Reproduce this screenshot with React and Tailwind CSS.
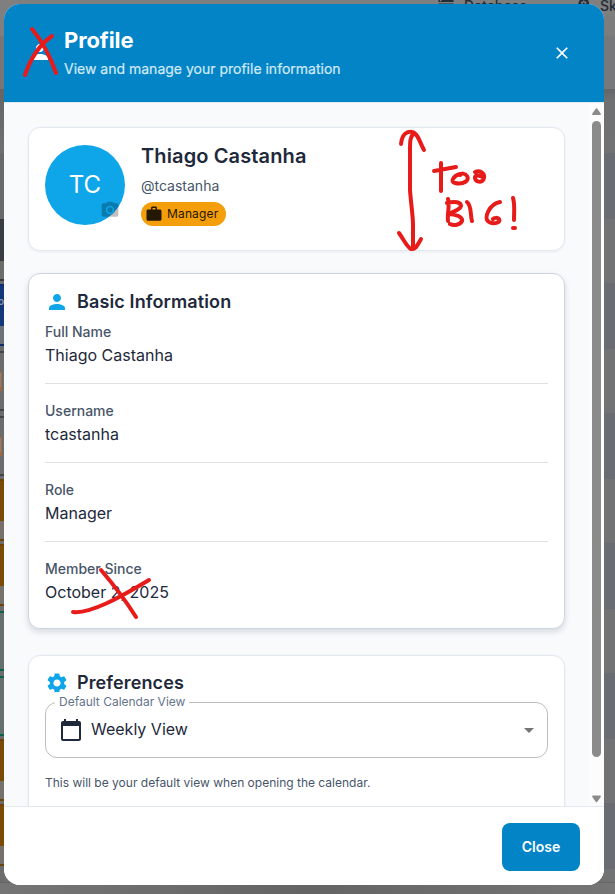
import React from "react";
import {
  MdPerson,
  MdSettings,
  MdCalendarToday,
  MdWork,
  MdCameraAlt,
  MdClose,
  MdArrowDropDown,
  MdStorage,
  MdPsychology,
} from "react-icons/md";

const shadowed = "border-[#e2e8f0] shadow-[0_1px_3px_rgba(15,23,42,0.06)]";

// Calendar entries that peek out on the left of the dialog.
function Entry({ line, fill, foot = "bg-[#77716b]", label }) {
  return (
    <div className="flex h-[62px] w-full flex-col">
      <div className={`h-[2px] ${line}`} />
      <div className={`flex h-[40px] justify-end overflow-hidden pt-[7px] text-[10px] font-semibold leading-[16px] text-[#8b98ae] ${fill}`}>
        {label}
      </div>
      <div className={`h-[18px] ${foot}`} />
      <div className={`h-[2px] ${line}`} />
    </div>
  );
}

function Outlined({ line, children }) {
  return (
    <div className={`flex h-[60px] w-full flex-col justify-center border-y-2 ${line}`}>
      {children}
    </div>
  );
}

function OrangeBox() {
  return (
    <div className="h-[19px] w-[2px] border-y border-r border-[#a0673f] border-b-4 bg-[#85827f]" />
  );
}

function LeftStrip() {
  return (
    <div className="flex w-1 flex-col overflow-hidden bg-[#6c6c6c]">
      <div className="h-[36px] shrink-0 bg-[#7f7f7f]" />
      <div className="h-[53px] shrink-0 bg-[#777777]" />
      <div className="h-[64px] shrink-0 bg-gradient-to-b from-[#656565] to-[#707070]" />
      <div className="h-[66px] shrink-0 bg-[#69696c]" />
      <Entry line="bg-[#393a3b]" fill="bg-[#373d42]" foot="bg-[#6c6c6a]" />
      <div className="h-[3px]" />
      <Entry line="bg-[#0d2f70]" fill="bg-[#12377a]" foot="bg-[#6d7279]" label="o" />
      <div className="h-[5px]" />
      <Outlined line="border-[#444546]"><OrangeBox /></Outlined>
      <div className="h-[5px]" />
      <Outlined line="border-[#444546]"><OrangeBox /></Outlined>
      <div className="h-[3px]" />
      <Entry line="bg-[#6b4208]" fill="bg-[#7a4b05]" />
      <div className="h-[3px]" />
      <Entry line="bg-[#6b4208]" fill="bg-[#7a4b05]" />
      <div className="h-[5px]" />
      <Outlined line="border-[#0c6249] bg-[#66706d]" />
      <div className="h-[5px]" />
      <Outlined line="border-[#0c6249] bg-[#66706d]" />
      <div className="h-[3px]" />
      <Entry line="bg-[#6b4208]" fill="bg-[#7a4b05]" />
      <div className="h-[3px]" />
      <Entry line="bg-[#6b4208]" fill="bg-[#7a4b05]" />
    </div>
  );
}

function RightStrip() {
  return (
    <div className="flex w-[11px] flex-col">
      <div className="h-[36px] shrink-0 bg-[#7d7d7d]" />
      <div className="h-[53px] shrink-0 bg-[#76787b]" />
      <div className="h-[64px] shrink-0 bg-gradient-to-b from-[#646566] via-[#6f7071] via-15% to-[#717273]" />
      {[0, 1, 2, 3, 4, 5].map((i) => (
        <React.Fragment key={i}>
          <div className="h-[66px] shrink-0 bg-[#696d73]" />
          <div className="h-[64px] shrink-0 bg-[#717273]" />
        </React.Fragment>
      ))}
    </div>
  );
}

function Backdrop() {
  return (
    <div className="relative flex h-full w-full justify-between overflow-hidden bg-[#707070]">
      <LeftStrip />
      <RightStrip />
      <div className="absolute left-0 top-0 h-4 w-full bg-[#7f7f7f]" />
      <div className="absolute left-[437px] top-[-4px] flex h-[18px] items-center whitespace-nowrap text-[14px] font-medium text-[#222b38]">
        <MdStorage className="size-[18px]" />
        <span className="ml-[9px] w-[110px]">Database</span>
        <MdPsychology className="size-[18px]" />
        <span className="ml-2">Skills</span>
      </div>
      <div className="absolute bottom-0 left-0 h-[12px] w-full border-t border-[#666] bg-gradient-to-r from-[#757575] via-[#646464] to-[#757575]" />
    </div>
  );
}

function Header() {
  return (
    <header className="flex h-[98px] shrink-0 items-center bg-[#0284c7] pl-6 pr-8 text-white">
      <MdPerson className="mt-[-2px] size-6" />
      <div className="ml-3 flex-1">
        <h1 className="mt-[-1px] text-[22px] font-bold leading-[32px] tracking-[-0.1px]">Profile</h1>
        <p className="mt-[1px] text-[14px] leading-6 text-[#d3eaf6] [-webkit-text-stroke:0.2px]">
          View and manage your profile information
        </p>
      </div>
      <MdClose className="size-5" />
    </header>
  );
}

function Summary() {
  return (
    <section className={`flex h-[124px] shrink-0 rounded-xl border bg-white px-4 pt-[17px] ${shadowed}`}>
      <div className="relative flex size-20 items-center justify-center rounded-full bg-[#0ea5e9] text-[24px] text-white">
        TC
        <div className="absolute bottom-0 right-0 flex size-[30px] items-center justify-center rounded-full">
          <MdCameraAlt className="size-5 text-black/25" />
        </div>
      </div>
      <div className="ml-4 flex flex-col items-start">
        <h2 className="mt-[-5px] text-[20px] font-semibold leading-8 tracking-[0.12px] text-[#1e293b]">Thiago Castanha</h2>
        <p className="mt-[4px] text-[14px] leading-5 text-[#475569]">@tcastanha</p>
        <span className="mt-[6px] flex h-6 items-center rounded-full bg-[#f59e0b] pl-1 pr-2 text-[12px] tracking-[0.15px] text-[#251802]">
          <MdWork className="mr-[4px] size-[18px]" />
          Manager
        </span>
      </div>
    </section>
  );
}

function Heading({ icon: Icon, children }) {
  return (
    <h2 className="flex h-6 items-center text-[18px] font-semibold tracking-[0.12px] text-[#1e293b]">
      <Icon className="mr-2 size-6 text-[#0ea5e9]" />
      <span className="mb-[2px]">{children}</span>
    </h2>
  );
}

function Field({ label, value }) {
  return (
    <div className="flex h-[79px] flex-col border-b border-[#dfe0e2] pt-[16px] last:border-b-0">
      <span className="text-[14px] font-medium leading-[22px] text-[#475569]">{label}</span>
      <span className="text-[16px] leading-6 text-[#1e293b]">{value}</span>
    </div>
  );
}

function BasicInformation() {
  return (
    <section className="mt-[22px] h-[356px] shrink-0 rounded-xl border border-[#cbd5e1] bg-white px-4 pt-4 shadow-[0_3px_6px_rgba(15,23,42,0.14)]">
      <Heading icon={MdPerson}>
        Basic Information
      </Heading>
      <div className="mt-[-9px]">
        <Field label="Full Name" value="Thiago Castanha" />
        <Field label="Username" value="tcastanha" />
        <Field label="Role" value="Manager" />
        <Field label="Member Since" value="October 2, 2025" />
      </div>
    </section>
  );
}

function Preferences() {
  return (
    <section className={`mt-[26px] h-[240px] shrink-0 rounded-xl border bg-white px-4 pt-[15px] ${shadowed}`}>
      <Heading icon={MdSettings}>Preferences</Heading>
      <div className="relative mt-[7px] flex h-[56px] items-center rounded-xl border border-[#bdbdbd] pl-[13px] pr-[6px] text-[#1e293b]">
        <span className="absolute left-[9px] top-[-11px] bg-white px-1 text-[12px] leading-5 text-[#64748b]">
          Default Calendar View
        </span>
        <MdCalendarToday className="size-6" />
        <span className="mb-[2px] ml-2 flex-1 text-[16px]">Weekly View</span>
        <MdArrowDropDown className="size-6 text-[#757575]" />
      </div>
      <p className="mt-[15px] text-[12px] leading-5 text-[#475569]">
        This will be your default view when opening the calendar.
      </p>
    </section>
  );
}

function Scrollbar() {
  return (
    <div className="flex w-[15px] shrink-0 flex-col items-center bg-[#fcfcfc] pt-[5px] pb-[3px]">
      <svg width="9" height="8" viewBox="0 0 9 8" fill="#8b8b8b">
        <path d="M3.7.8Q4.5-.2 5.3.8L8.7 5.5Q9.3 7 8 7H1Q-.3 7 .3 5.5Z" />
      </svg>
      <div className="mt-[5px] h-[636px] w-[9px] rounded-full bg-[#8b8b8b]" />
      <svg className="mt-auto" width="9" height="8" viewBox="0 0 9 8" fill="#8b8b8b">
        <path d="M3.7 6.7Q4.5 7.7 5.3 6.7L8.7 2Q9.3.5 8 .5H1Q-.3.5.3 2Z" />
      </svg>
    </div>
  );
}

function Markup() {
  return (
    <svg
      className="pointer-events-none absolute left-0 top-0"
      width="615"
      height="894"
      fill="none"
      stroke="#e81b1b"
      strokeWidth="4"
      strokeLinecap="round"
      strokeLinejoin="round"
    >
      <path d="M32 29C42 41 49 53 56 73M52 36C39 45 31 57 25 75" />
      <path d="M401 144C402 134 407 131 412 132C418 133 420 143 424 150M414 133C410 137 410 141 410 150V190C411 204 413 216 413 225V247M399 233C404 240 407 247 411 249C416 250 418 244 421 239" />
      <path d="M434 171L456 167M441 163V191M460 174C453 176 450 182 455 183C464 185 470 180 467 176C465 173 461 173 460 175M475 172C480 170 485 173 484 178C483 184 474 182 475 177C476 174 480 176 483 177" />
      <path d="M448 199C450 206 447 214 448 221M447 203C455 201 461 202 461 206C460 210 453 212 448 214C456 214 463 217 462 221C460 225 454 226 450 224M467 202C472 206 470 215 472 221M500 202C489 204 483 219 489 222C495 225 501 222 499 219C497 217 494 218 493 219M513 198C515 204 514 211 514 220M513 228H515" />
      <path d="M101 570C113 584 124 598 136 617M73 612C90 614 119 598 149 580" />
    </svg>
  );
}

export default function App() {
  return (
    <div className="relative h-[894px] w-[615px] overflow-hidden font-['Inter',sans-serif]">
      <Backdrop />
      <div
        role="dialog"
        className="absolute left-1 top-1 flex h-[881px] w-[600px] flex-col overflow-hidden rounded-2xl bg-white"
      >
        <Header />
        <div className="flex h-[704px] shrink-0 overflow-hidden border-t border-[#e2e8f0] bg-[#f8fafc]">
          <div className="flex flex-1 flex-col overflow-hidden pl-6 pr-6 pt-6">
            <Summary />
            <BasicInformation />
            <Preferences />
          </div>
          <Scrollbar />
        </div>
        <footer className="flex flex-1 items-center justify-end border-t border-[#e2e8f0] bg-white pr-6 pt-[2px]">
          <button className="h-12 w-[78px] rounded-lg bg-[#0284c7] pb-[2px] text-[14px] font-semibold text-white">
            Close
          </button>
        </footer>
      </div>
      <Markup />
    </div>
  );
}
